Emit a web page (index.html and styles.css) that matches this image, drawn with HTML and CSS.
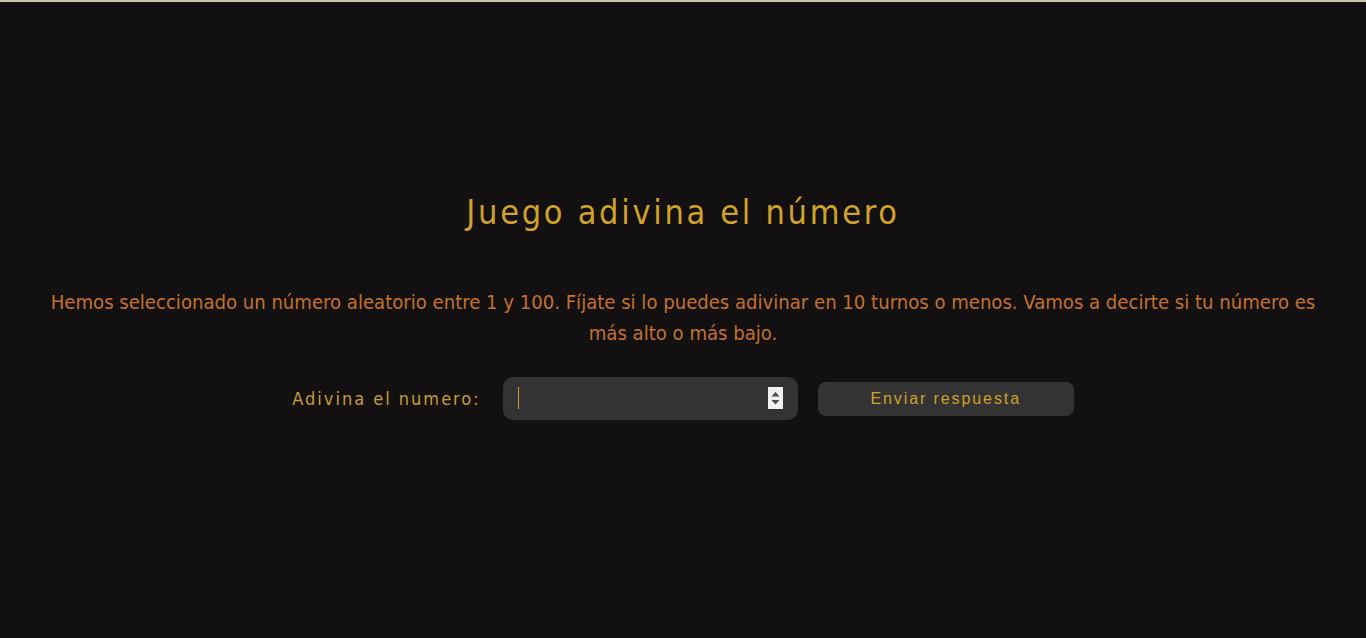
FILE: index.html
```html
<!DOCTYPE html>
<html lang="es">
<head>
<meta charset="utf-8">
<title>Juego adivina el número</title>
<link rel="stylesheet" href="styles.css">
</head>
<body>
<main class="container">
  <h1 class="title">Juego adivina el número</h1>
  <p class="intro">Hemos seleccionado un número aleatorio entre 1 y 100. Fíjate si lo puedes adivinar en 10 turnos o menos. Vamos a decirte si tu número es más alto o más bajo.</p>
  <form class="guess-form">
    <label class="guess-label" for="guessField">Adivina el numero:</label>
    <div class="field">
      <input class="guess-field" id="guessField" type="text" autofocus>
      <span class="caret"></span>
      <span class="spinner">
        <svg width="15" height="22" viewBox="0 0 15 22"><rect width="15" height="22" fill="#efefef"/><path d="M3.5 9.5 L7.5 5 L11.5 9.5 Z" fill="#4a4a4a"/><path d="M3.5 13 L7.5 17.5 L11.5 13 Z" fill="#4a4a4a"/></svg>
      </span>
    </div>
    <button class="guess-submit" type="button">Enviar respuesta</button>
  </form>
</main>
</body>
</html>
```

FILE: styles.css
```css
html, body {
  margin: 0;
  padding: 0;
}
body {
  background: #131011;
  border-top: 2px solid #c8c4aa;
  min-height: 636px;
  font-family: "DejaVu Sans Condensed", "DejaVu Sans", sans-serif;
  font-stretch: condensed;
}
.container {
  padding: 188px 40px 0;
  text-align: center;
}
.title {
  margin: 0;
  font-size: 34px;
  line-height: 44px;
  font-weight: normal;
  letter-spacing: 2.7px;
  color: #cfa228;
}
.intro {
  margin: 53px 0 0;
  font-size: 20.1px;
  line-height: 31px;
  color: #c4722a;
}
.guess-form {
  margin-top: 28px;
  display: flex;
  justify-content: center;
  align-items: center;
}
.guess-label {
  font-size: 18px;
  letter-spacing: 2px;
  color: #c59e2a;
  margin-right: 22px;
}
.field {
  position: relative;
  width: 295px;
  height: 43px;
  margin-right: 20px;
}
.guess-field {
  box-sizing: border-box;
  width: 100%;
  height: 100%;
  border: none;
  border-radius: 10px;
  background: #333333;
  outline: none;
  color: #cfa228;
  caret-color: #cfa228;
  padding: 0 15px;
  font-size: 18px;
}
.caret {
  position: absolute;
  left: 15px;
  top: 10px;
  width: 1px;
  height: 22px;
  background: #cfa228;
}
.spinner {
  position: absolute;
  right: 15px;
  top: 10px;
  width: 15px;
  height: 22px;
  display: block;
}
.spinner svg {
  display: block;
}
.guess-submit {
  width: 256px;
  height: 34px;
  border: none;
  border-radius: 8px;
  background: #333333;
  color: #cfa228;
  font-family: "Liberation Sans", Arial, sans-serif;
  font-stretch: normal;
  font-size: 16px;
  letter-spacing: 1.9px;
  padding: 0;
}
```
